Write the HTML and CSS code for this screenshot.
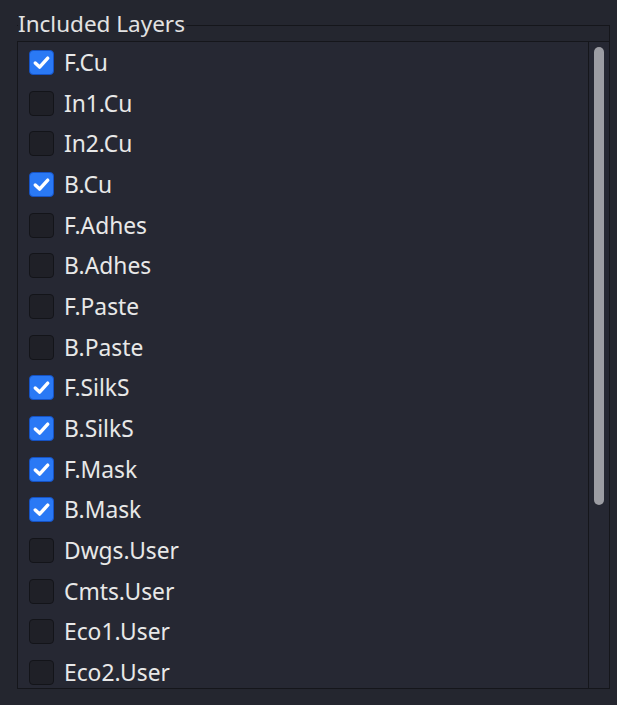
FILE: index.html
```html
<!DOCTYPE html>
<html>
<head>
<meta charset="utf-8">
<link rel="stylesheet" href="styles.css">
</head>
<body>
<div class="group">
  <div class="title">Included Layers</div>
  <div class="list">
    <div class="items">
      <div class="row"><span class="cb on"><svg viewBox="0 0 24 24"><path d="M5.5 12.5 L10 16.8 L18.5 7.5"/></svg></span><span class="label">F.Cu</span></div>
      <div class="row"><span class="cb"></span><span class="label">In1.Cu</span></div>
      <div class="row"><span class="cb"></span><span class="label">In2.Cu</span></div>
      <div class="row"><span class="cb on"><svg viewBox="0 0 24 24"><path d="M5.5 12.5 L10 16.8 L18.5 7.5"/></svg></span><span class="label">B.Cu</span></div>
      <div class="row"><span class="cb"></span><span class="label">F.Adhes</span></div>
      <div class="row"><span class="cb"></span><span class="label">B.Adhes</span></div>
      <div class="row"><span class="cb"></span><span class="label">F.Paste</span></div>
      <div class="row"><span class="cb"></span><span class="label">B.Paste</span></div>
      <div class="row"><span class="cb on"><svg viewBox="0 0 24 24"><path d="M5.5 12.5 L10 16.8 L18.5 7.5"/></svg></span><span class="label">F.SilkS</span></div>
      <div class="row"><span class="cb on"><svg viewBox="0 0 24 24"><path d="M5.5 12.5 L10 16.8 L18.5 7.5"/></svg></span><span class="label">B.SilkS</span></div>
      <div class="row"><span class="cb on"><svg viewBox="0 0 24 24"><path d="M5.5 12.5 L10 16.8 L18.5 7.5"/></svg></span><span class="label">F.Mask</span></div>
      <div class="row"><span class="cb on"><svg viewBox="0 0 24 24"><path d="M5.5 12.5 L10 16.8 L18.5 7.5"/></svg></span><span class="label">B.Mask</span></div>
      <div class="row"><span class="cb"></span><span class="label">Dwgs.User</span></div>
      <div class="row"><span class="cb"></span><span class="label">Cmts.User</span></div>
      <div class="row"><span class="cb"></span><span class="label">Eco1.User</span></div>
      <div class="row"><span class="cb"></span><span class="label">Eco2.User</span></div>
    </div>
    <div class="scrollbar"><div class="handle"></div></div>
  </div>
</div>
</body>
</html>
```
FILE: styles.css
```css
html, body {
  margin: 0;
  padding: 0;
  background: #24262f;
  width: 617px;
  height: 705px;
  overflow: hidden;
  font-family: "Noto Sans", "Open Sans", sans-serif;
  color: #e6e6e6;
}
.group {
  position: relative;
  margin: 25px 7px 0 17px;
  border-top: 1px solid #15161b;
  border-right: 1px solid #15161b;
  height: 663px;
}
.title {
  position: absolute;
  left: 1px;
  top: -15px;
  padding-right: 1px;
  background: #24262f;
  font-size: 22.5px;
  line-height: 26px;
  color: #e2e2e2;
}
.list {
  margin-top: 15px;
  border: 1px solid #15161b;
  margin-right: -1px;
  height: 646px;
  background: #262833;
  display: flex;
  overflow: hidden;
}
.items {
  flex: 1;
  padding-top: 8px;
}
.row {
  height: 40.67px;
  display: flex;
  align-items: flex-start;
}
.cb {
  margin-left: 11px;
  width: 23px;
  height: 23px;
  border: 1px solid #131419;
  border-radius: 4px;
  background: #1f2027;
  flex: none;
  display: flex;
}
.cb.on {
  background: #2a79f5;
  border-color: #1552c4;
}
.cb svg {
  width: 23px;
  height: 23px;
  fill: none;
  stroke: #ffffff;
  stroke-width: 3.6;
  stroke-linecap: round;
  stroke-linejoin: round;
}
.label {
  margin-left: 10px;
  font-size: 22.8px;
  line-height: 26px;
  color: #e8e8e8;
}
.scrollbar {
  width: 20px;
  border-left: 1px solid #15161b;
  flex: none;
  padding-top: 5px;
  display: flex;
  justify-content: center;
}
.handle {
  width: 10px;
  height: 458px;
  background: #9c9da3;
  border-radius: 5px;
}
```
